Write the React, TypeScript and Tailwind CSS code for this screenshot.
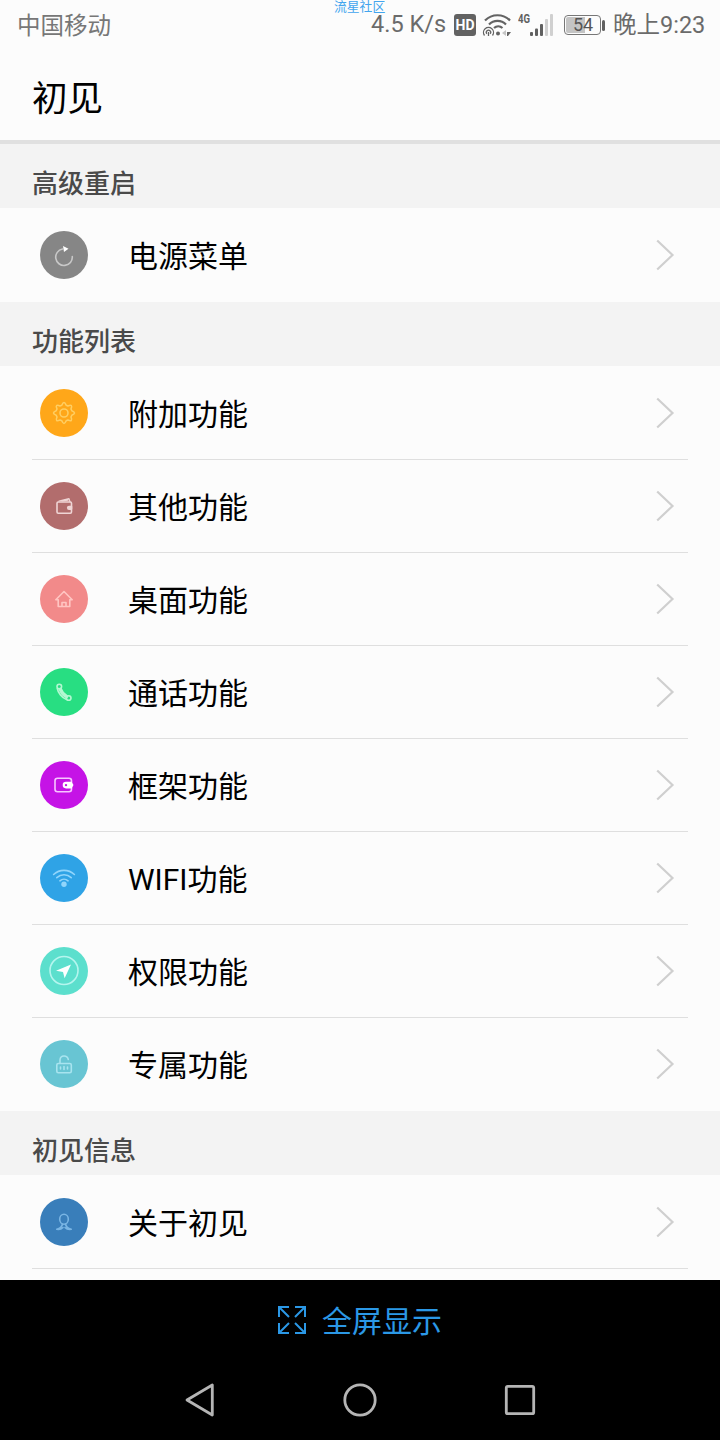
import React from "react";

type Item = { label: string; color: string; icon: React.ReactNode };

const Glyph = ({ children, className = "text-white/60" }: { children: React.ReactNode; className?: string }) => (
  <svg viewBox="0 0 48 48" className={`size-12 ${className}`} fill="none" stroke="currentColor" strokeWidth="1.6" strokeLinecap="round" strokeLinejoin="round">
    {children}
  </svg>
);

const restart: Item[] = [
  {
    label: "电源菜单",
    color: "bg-[#868686]",
    icon: (
      <Glyph className="text-[#c8c8c8]">
        <path d="M22.5 18A8.3 8.3 0 1 0 32.3 25.5" />
        <path d="M23 15l5.5 2.8-4.5 3.2z" fill="currentColor" stroke="none" className="text-white" />
      </Glyph>
    ),
  },
];

const features: Item[] = [
  {
    label: "附加功能",
    color: "bg-[#ffa719]",
    icon: (
      <Glyph className="text-[#ffce62]">
        <circle cx="24" cy="24" r="4" />
        <path d="M21.8 16.2q2.2-5.4 4.4 0l1.7.7q5.3-2.3 3.1 3.1l.8 1.8q5.4 2.2 0 4.4l-.8 1.8q2.2 5.3-3.1 3.1l-1.7.7q-2.2 5.4-4.4 0l-1.8-.7q-5.3 2.2-3-3.1l-.8-1.8q-5.4-2.2 0-4.4l.8-1.8q-2.3-5.4 3-3.1z" />
      </Glyph>
    ),
  },
  {
    label: "其他功能",
    color: "bg-[#b26d6d]",
    icon: (
      <Glyph className="text-[#efd5d5]">
        <rect x="17" y="20" width="14.5" height="11.3" rx="1.2" />
        <path d="M19 19l10-2.3 1 3M22 19l6-.8" strokeWidth="1.2" />
        <path d="M31.5 24.5h-2.5a1.300 1.300 0 0 0 0 2.600h2.500z" fill="currentColor" />
      </Glyph>
    ),
  },
  {
    label: "桌面功能",
    color: "bg-[#f28a8a]",
    icon: (
      <Glyph className="text-[#ffc5c2]">
        <path d="M15.800 24.800L24 16.500l8.200 8.300h-2.400v6.700H18.200v-6.700z" />
        <path d="M22 31v-3.500h4V31" />
      </Glyph>
    ),
  },
  {
    label: "通话功能",
    color: "bg-[#28de82]",
    icon: (
      <Glyph className="text-[#b3f8d1]">
        <path d="M20.500 21.500c1 3 3.200 5.500 6 7" strokeWidth="3.600" />
        <circle cx="19.300" cy="18.600" r="2.300" />
        <circle cx="28.700" cy="30" r="2.300" />
        <path d="M17.300 20.500c.8 4.500 4.500 9.300 9.200 11" />
      </Glyph>
    ),
  },
  {
    label: "框架功能",
    color: "bg-[#c513e6]",
    icon: (
      <Glyph className="text-[#f7c6ff]">
        <rect x="15" y="17.200" width="16.500" height="13.500" rx="2.500" />
        <path d="M31.500 20.800h-5.500a3.300 3.300 0 0 0 0 6.600h5.500l2-3.300z" fill="currentColor" stroke="none" className="text-white" />
        <circle cx="26" cy="24.100" r="1.200" fill="#c513e6" stroke="none" />
      </Glyph>
    ),
  },
  {
    label: "WIFI功能",
    color: "bg-[#2fa3e6]",
    icon: (
      <Glyph className="text-[#91d5fb]">
        <path d="M13.600 20.500a15.300 15.300 0 0 1 20.800 0M16.800 23.600a10.700 10.700 0 0 1 14.400 0M19.900 26.800a6.300 6.300 0 0 1 8.200 0" />
        <circle cx="24" cy="30.300" r="2.700" fill="currentColor" stroke="none" />
      </Glyph>
    ),
  },
  {
    label: "权限功能",
    color: "bg-[#5cdfcd]",
    icon: (
      <Glyph className="text-[#b5f5ee]">
        <circle cx="24" cy="23.500" r="14" />
        <path d="M31 17.500l-15 6.300 7 1.200 1.600 6.200z" fill="white" stroke="none" />
      </Glyph>
    ),
  },
  {
    label: "专属功能",
    color: "bg-[#68c5d3]",
    icon: (
      <Glyph className="text-[#a8e4ef]">
        <rect x="16.800" y="23.500" width="14.500" height="9.300" rx="1.500" />
        <path d="M20 23v-3.200c.5-5 7.200-5 8.300-.3M20.500 27v2M24 26.500v3M27.500 27v2" />
      </Glyph>
    ),
  },
];

const about: Item[] = [
  {
    label: "关于初见",
    color: "bg-[#397eba]",
    icon: (
      <Glyph className="text-[#79b5e4]">
        <ellipse cx="24" cy="21.200" rx="4.300" ry="5" />
        <path d="M22.500 26c-.5 2.800-2.500 4.500-5.700 5.300 2.500.4 4.700-.2 6.200-1.800M25.500 26c.5 2.800 2.500 4.500 5.700 5.300-2.500.4-4.700-.2-6.200-1.800" />
      </Glyph>
    ),
  },
];

const Section = ({ title, items, lastLine = false }: { title: string; items: Item[]; lastLine?: boolean }) => (
  <section>
    <h2 className="flex h-16 items-center bg-[#f3f3f3] px-8 pt-4 text-[26px] leading-9 font-medium text-[#4a4a4a]">{title}</h2>
    <ul className="px-8 pt-px">
      {items.map((item, i) => (
        <li
          key={item.label}
          className={`flex h-[93px] items-center border-b pl-2 pr-3 ${i < items.length - 1 || lastLine ? "border-[#dfdfdf]" : "border-transparent"}`}
        >
          <span className={`size-12 shrink-0 rounded-full ${item.color}`}>{item.icon}</span>
          <span className="ml-10 flex-1 pt-[3px] text-[30px] leading-10 text-black">{item.label}</span>
          <svg viewBox="0 0 20 32" className="h-8 w-5" fill="none" stroke="#cfcfcf" strokeWidth="2.200">
            <path d="M1.200 1.500L16.500 16 1.200 30.500" />
          </svg>
        </li>
      ))}
    </ul>
  </section>
);

const StatusBar = () => (
  <div className="relative flex h-[50px] items-center justify-between pl-[17px] pr-[15px] text-[23.500px] leading-none text-[#6b6b6b]">
    <span className="pt-[3px] text-[#777]">中国移动</span>
    <span className="absolute left-[334px] top-0 text-[12.800px] leading-[13px] text-[#42a5ee]">流星社区</span>
    <div className="flex items-center">
      <span className="mr-[7px] w-[76px] whitespace-nowrap text-[23.500px]">4.5 K/s</span>
      <span className="mr-1.5 flex h-[22px] w-[22px] items-center justify-center rounded-[3px] bg-[#626262] text-[14px] font-bold text-white">HD</span>
      <svg viewBox="0 0 30 24" className="mr-1.5 h-6 w-[30px]" fill="none" stroke="#636363" strokeWidth="2.200">
        <path d="M3 7.500a17.500 17.500 0 0 1 25 0M7 11.500a12 12 0 0 1 17 0M12 15a6.500 6.500 0 0 1 8.500 0" />
        <circle cx="16" cy="20.500" r="2" fill="#636363" stroke="none" />
        <path d="M24 17v6l-4-3z" fill="#c5c5c5" stroke="none" />
        <path d="M25 19h4l-3 4h-1z" fill="#636363" stroke="none" />
        <path d="M2.500 22.500a5 5 0 1 1 8 0M4.800 20.800a2.200 2.200 0 1 1 3.400 0M6.500 19v4" strokeWidth="1.300" />
      </svg>
      <svg viewBox="0 0 36 26" className="mr-2.5 h-[26px] w-9" fill="#606060">
        <text x="0" y="11" fontFamily="Roboto" fontSize="13" fontWeight="700" textLength="12" lengthAdjust="spacingAndGlyphs">4G</text>
        <rect x="12" y="20" width="3" height="4" rx="1" />
        <rect x="17" y="16.500" width="3" height="7.500" rx="1" />
        <rect x="22" y="12" width="3" height="12" rx="1" />
        <rect x="27" y="7" width="3" height="17" rx="1" fill="#d0d0d0" />
        <rect x="32" y="2" width="3" height="22" rx="1" fill="#d0d0d0" />
      </svg>
      <span className="flex h-5 w-[37px] items-center rounded-[4px] border border-[#777] p-px">
        <span className="flex h-full w-[19px] items-center rounded-l-[2px] bg-[#c4c4c4] pl-[7px] text-[18px] text-[#555]">54</span>
      </span>
      <span className="ml-px mr-2 h-[11px] w-[3px] rounded-sm bg-[#606060]" />
      <span className="w-[92px] whitespace-nowrap pt-px text-[23.500px]">晚上9:23</span>
    </div>
  </div>
);

const NavBar = () => (
  <footer className="h-40 bg-black">
    <button className="flex h-20 w-full items-center justify-center gap-4 text-[30px] leading-10 text-[#2b98e6]">
      <svg viewBox="0 0 28 28" className="size-7" fill="none" stroke="currentColor" strokeWidth="2">
        <path d="M11 1H1v10M1 1l10 10M17 1h10v10M27 1L17 11M1 17v10h10M1 27l10-10M27 17v10H17M27 27L17 17" />
      </svg>
      <span className="pt-1">全屏显示</span>
    </button>
    <div className="flex h-20 items-center justify-center gap-[120px]">
      <svg viewBox="0 0 40 40" className="size-10" fill="none" stroke="#b5b5b5" strokeWidth="2.800" strokeLinejoin="round">
        <path d="M7 20L32.300 5v30z" />
      </svg>
      <svg viewBox="0 0 40 40" className="size-10" fill="none" stroke="#b5b5b5" strokeWidth="2.800">
        <circle cx="20" cy="20" r="15.200" />
      </svg>
      <svg viewBox="0 0 40 40" className="size-10" fill="none" stroke="#b5b5b5" strokeWidth="2.800">
        <rect x="6.300" y="6.300" width="27.400" height="27.400" rx="1.500" />
      </svg>
    </div>
  </footer>
);

export default function App() {
  return (
    <div className="flex h-[1440px] w-[720px] flex-col overflow-hidden bg-[#fcfcfc] font-[Roboto,'Noto_Sans_CJK_SC',sans-serif]">
      <StatusBar />
      <h1 className="flex h-[94px] items-center border-b-4 border-[#e0e0e0] px-8 pt-2.5 text-[35.500px] leading-none text-black">初见</h1>
      <main className="min-h-0 flex-1 overflow-hidden">
        <Section title="高级重启" items={restart} />
        <Section title="功能列表" items={features} />
        <Section title="初见信息" items={about} lastLine />
      </main>
      <NavBar />
    </div>
  );
}
